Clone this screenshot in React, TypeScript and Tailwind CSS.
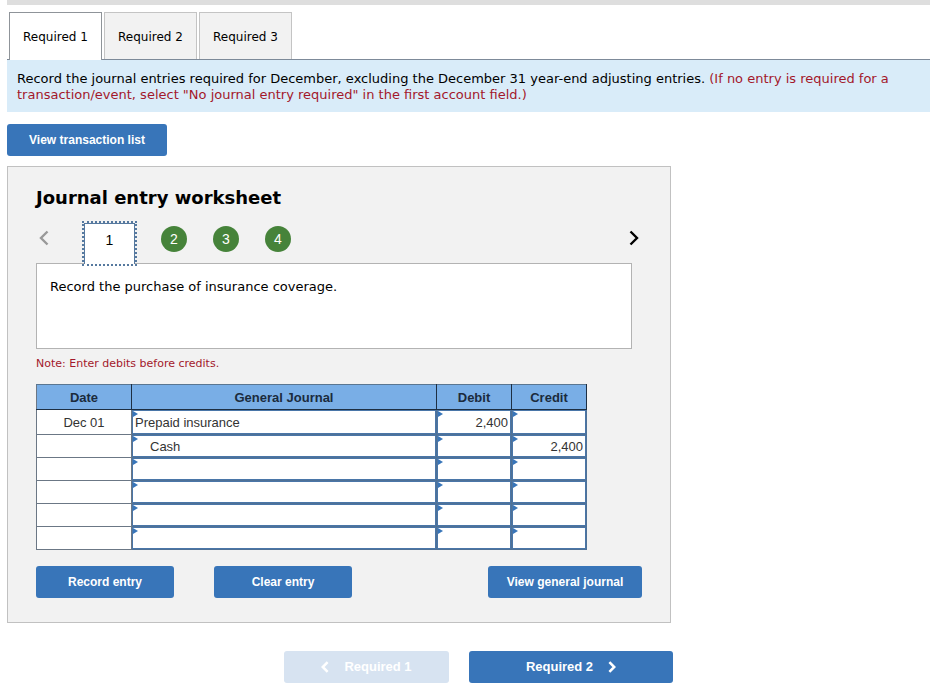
import type { ReactNode } from "react";

const verdana = "font-['Verdana','DejaVu_Sans',sans-serif]";
const arial = "font-['Arial','Liberation_Sans',sans-serif]";

type Row = { date: string; account: string; indent?: boolean; debit: string; credit: string };

const rows: Row[] = [
  { date: "Dec 01", account: "Prepaid insurance", debit: "2,400", credit: "" },
  { date: "", account: "Cash", indent: true, debit: "", credit: "2,400" },
  { date: "", account: "", debit: "", credit: "" },
  { date: "", account: "", debit: "", credit: "" },
  { date: "", account: "", debit: "", credit: "" },
  { date: "", account: "", debit: "", credit: "" },
];

function Chevron({ dir, bold, className }: { dir: "left" | "right"; bold?: boolean; className: string }) {
  return (
    <svg viewBox="0 0 10 16" fill="none" stroke="currentColor" className={className} aria-hidden="true">
      <path d={dir === "left" ? "M8.5 1.5 2 8l6.5 6.5" : "M1.5 1.5 8 8l-6.5 6.5"} strokeWidth={bold ? 3.4 : 2.4} />
    </svg>
  );
}

function ActionButton({ className, children }: { className: string; children: ReactNode }) {
  return (
    <button
      type="button"
      className={`${arial} h-8 rounded-[3px] bg-[#3875b9] text-xs font-bold text-white ${className}`}
    >
      {children}
    </button>
  );
}

function EntryCell({ label, value, className }: { label: string; value: string; className: string }) {
  return (
    <td className="relative border border-[#4f7196] bg-white p-0">
      <input
        type="text"
        aria-label={label}
        defaultValue={value}
        className={`block w-full border border-[#4a76a8] text-[13px] text-[#333] outline-none ${className}`}
      />
      <svg viewBox="0 0 5 6" className="absolute left-px top-px h-1.5 w-[5px]" aria-hidden="true">
        <path d="M0 0 5 3 0 6Z" fill="#3875b9" />
      </svg>
    </td>
  );
}

export default function App() {
  return (
    <main className={`${verdana} bg-white pl-[7px] pr-[13px] text-black`}>
      <div className="h-[5px] bg-[#dedede]" />

      <div role="tablist" className="mt-[7px] flex gap-0.5 border-b border-[#7d8a99] pl-0.5 text-xs">
        <button
          type="button"
          role="tab"
          aria-selected="true"
          className="relative -mb-px h-12 w-[93px] border border-b-0 border-[#8f9499] bg-white"
        >
          Required 1
        </button>
        <button
          type="button"
          role="tab"
          aria-selected="false"
          className="h-[47px] w-[93px] border border-b-0 border-[#c4c4c4] bg-[#f2f2f2] pt-0.5"
        >
          Required 2
        </button>
        <button
          type="button"
          role="tab"
          aria-selected="false"
          className="h-[47px] w-[93px] border border-b-0 border-[#c4c4c4] bg-[#f2f2f2] pt-0.5"
        >
          Required 3
        </button>
      </div>

      <p className="bg-[#d9ecf9] px-2.5 pb-[9px] pt-[11px] text-[13px] leading-4">
        Record the journal entries required for December, excluding the December 31 year-end adjusting entries.{" "}
        <span className="text-[#a3182b]">
          (If no entry is required for a transaction/event, select "No journal entry required" in the first account
          field.)
        </span>
      </p>

      <ActionButton className="mt-3 block w-40">View transaction list</ActionButton>

      <section className="mt-2.5 w-full max-w-[664px] border border-[#c1c1c1] bg-[#f2f2f2] px-7 pb-6 pt-[19px]">
        <h1 className="text-lg font-bold leading-6">Journal entry worksheet</h1>

        <div className="mr-2.5">
          <div className="flex items-start pt-[13px]">
            <button type="button" aria-label="Previous entry" className="mt-[7px] w-[48px] pl-[3px] text-[#999]">
              <Chevron dir="left" className="h-4 w-2.5" />
            </button>
            <button
              type="button"
              className={`${arial} relative -mb-px h-[41px] w-[51px] border border-b-0 border-[#56799f] bg-white pb-2 text-sm outline-2 outline-dotted outline-[#56799f]`}
            >
              1
            </button>
            <div className={`${arial} ml-[26px] mt-[3px] flex gap-[26px] text-sm text-white`}>
              <button type="button" className="size-[26px] rounded-full bg-[#46833a]">2</button>
              <button type="button" className="size-[26px] rounded-full bg-[#46833a]">3</button>
              <button type="button" className="size-[26px] rounded-full bg-[#46833a]">4</button>
            </div>
            <button type="button" aria-label="Next entry" className="-mr-[7px] ml-auto mt-[7px]">
              <Chevron dir="right" className="h-4 w-2.5" />
            </button>
          </div>

          <div className="h-[86px] border border-[#b3b3b3] bg-white px-[13px] py-[15px] text-[13px] leading-4">
            Record the purchase of insurance coverage.
          </div>
        </div>

        <p className="mt-[7px] text-[11px] leading-4 text-[#a3182b]">Note: Enter debits before credits.</p>

        <table
          className={`${arial} mt-3 w-full max-w-[551px] table-fixed border-collapse text-[13px] text-[#333]`}
        >
          <colgroup>
            <col className="w-[95px]" />
            <col />
            <col className="w-[75px]" />
            <col className="w-[75px]" />
          </colgroup>
          <thead>
            <tr className="h-[25px] bg-[#79aee6] text-[#1b2b3d]">
              <th className="border border-[#1e2f42] border-l-[#6b7785] border-t-[#5a7691] p-0 pt-px">Date</th>
              <th className="border border-[#1e2f42] border-t-[#5a7691] p-0 pt-px">General Journal</th>
              <th className="border border-[#1e2f42] border-t-[#5a7691] p-0 pt-px">Debit</th>
              <th className="border border-[#1e2f42] border-t-[#5a7691] p-0 pt-px">Credit</th>
            </tr>
          </thead>
          <tbody>
            {rows.map((row, i) => {
              const height = i === 0 ? "h-6" : "h-[22px]";
              return (
                <tr key={i} className={i === 0 ? "h-[25px]" : "h-[23px]"}>
                  <td className="border border-[#6b7785] bg-white p-0 pt-px text-center leading-5">{row.date}</td>
                  <EntryCell
                    label={`General journal, row ${i + 1}`}
                    value={row.account}
                    className={`${height} ${row.indent ? "pl-[17px]" : "pl-0.5"}`}
                  />
                  <EntryCell
                    label={`Debit, row ${i + 1}`}
                    value={row.debit}
                    className={`${height} pr-0.5 text-right`}
                  />
                  <EntryCell
                    label={`Credit, row ${i + 1}`}
                    value={row.credit}
                    className={`${height} pr-0.5 text-right`}
                  />
                </tr>
              );
            })}
          </tbody>
        </table>

        <div className="mt-4 flex">
          <ActionButton className="w-[138px]">Record entry</ActionButton>
          <ActionButton className="ml-10 w-[138px]">Clear entry</ActionButton>
          <ActionButton className="ml-auto w-[154px]">View general journal</ActionButton>
        </div>
      </section>

      <nav className={`${arial} flex justify-center gap-5 pb-3.5 pl-5 pt-7 text-[13px] font-bold text-white`}>
        <button
          type="button"
          disabled
          className="flex h-8 w-[165px] items-center justify-center gap-[15px] rounded-[3px] bg-[#d7e3f1]"
        >
          <Chevron dir="left" bold className="h-3 w-2" />
          Required 1
        </button>
        <button
          type="button"
          className="flex h-8 w-[204px] items-center justify-center gap-[15px] rounded-[3px] bg-[#3875b9]"
        >
          Required 2
          <Chevron dir="right" bold className="h-3 w-2" />
        </button>
      </nav>
    </main>
  );
}
